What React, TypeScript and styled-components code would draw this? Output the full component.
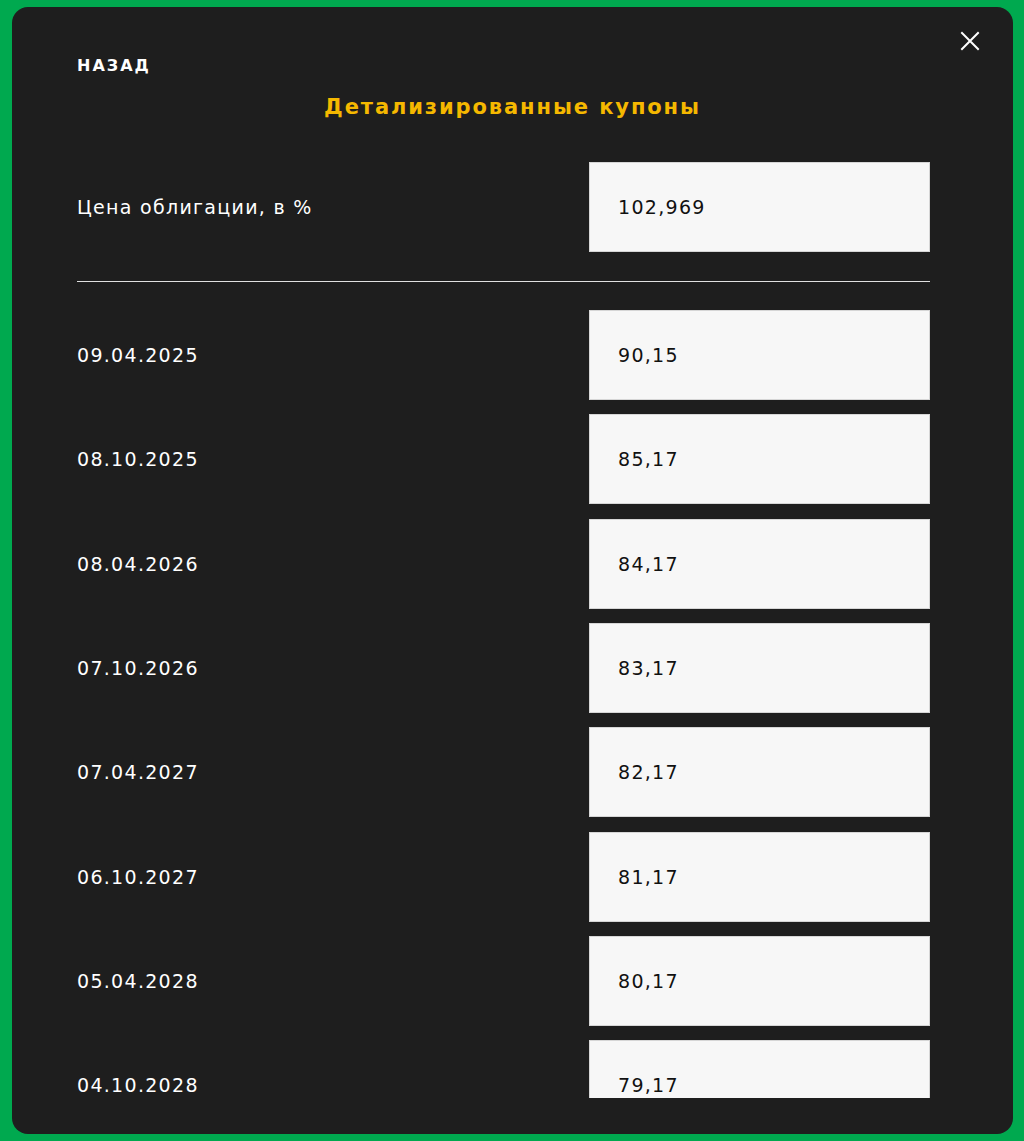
import React from "react";
import styled, { createGlobalStyle } from "styled-components";

const Global = createGlobalStyle`
  html, body { margin: 0; padding: 0; }
  body {
    background: #00a94f;
    font-family: "DejaVu Sans", "Noto Sans", sans-serif;
  }
  * { box-sizing: border-box; }
`;

const Page = styled.div`
  padding: 7px 11px 7px 12px;
  height: 1141px;
`;

const Modal = styled.div`
  position: relative;
  height: 1127px;
  background: #1e1e1e;
  border-radius: 16px;
  padding: 49px 83px 36px 65px;
  display: flex;
  flex-direction: column;
`;

const Close = styled.button`
  position: absolute;
  top: 17px;
  right: 26px;
  width: 34px;
  height: 34px;
  padding: 0;
  border: 0;
  background: transparent;
  display: flex;
  align-items: center;
  justify-content: center;
  cursor: pointer;
`;

const Back = styled.div`
  color: #ffffff;
  font-weight: 700;
  font-size: 16px;
  line-height: 20px;
  letter-spacing: 2px;
`;

const Title = styled.h2`
  margin: 17px -83px 0 -65px;
  text-align: center;
  color: #f5b800;
  font-weight: 700;
  font-size: 21px;
  line-height: 28px;
  letter-spacing: 1.9px;
`;

const Scroll = styled.div`
  margin-top: 41px;
  flex: 1;
  overflow: hidden;
`;

const Row = styled.div<{ $last?: boolean }>`
  display: flex;
  align-items: center;
  justify-content: space-between;
  margin-bottom: ${(p) => (p.$last ? "0" : "14.33px")};
`;

const Label = styled.div`
  color: #ffffff;
  font-size: 19px;
  letter-spacing: 1.3px;
`;

const Field = styled.div`
  width: 341px;
  height: 90px;
  background: #f7f7f7;
  border: 1px solid #d6d6d6;
  display: flex;
  align-items: center;
  padding-left: 28px;
  color: #111111;
  font-size: 19px;
  letter-spacing: 1.3px;
`;

const Divider = styled.hr`
  margin: 29px 0 28px;
  border: 0;
  height: 1px;
  background: #e0e0e0;
`;

const coupons: [string, string][] = [
  ["09.04.2025", "90,15"],
  ["08.10.2025", "85,17"],
  ["08.04.2026", "84,17"],
  ["07.10.2026", "83,17"],
  ["07.04.2027", "82,17"],
  ["06.10.2027", "81,17"],
  ["05.04.2028", "80,17"],
  ["04.10.2028", "79,17"],
];

export default function App() {
  return (
    <Page>
      <Global />
      <Modal>
        <Close aria-label="close">
          <svg width="20" height="20" viewBox="0 0 20 20">
            <path d="M2 2 L18 18 M18 2 L2 18" stroke="#fff" strokeWidth="2" strokeLinecap="square" />
          </svg>
        </Close>
        <Back>НАЗАД</Back>
        <Title>Детализированные купоны</Title>
        <Scroll>
          <Row $last>
            <Label>Цена облигации, в %</Label>
            <Field>102,969</Field>
          </Row>
          <Divider />
          {coupons.map(([d, v]) => (
            <Row key={d}>
              <Label>{d}</Label>
              <Field>{v}</Field>
            </Row>
          ))}
        </Scroll>
      </Modal>
    </Page>
  );
}
